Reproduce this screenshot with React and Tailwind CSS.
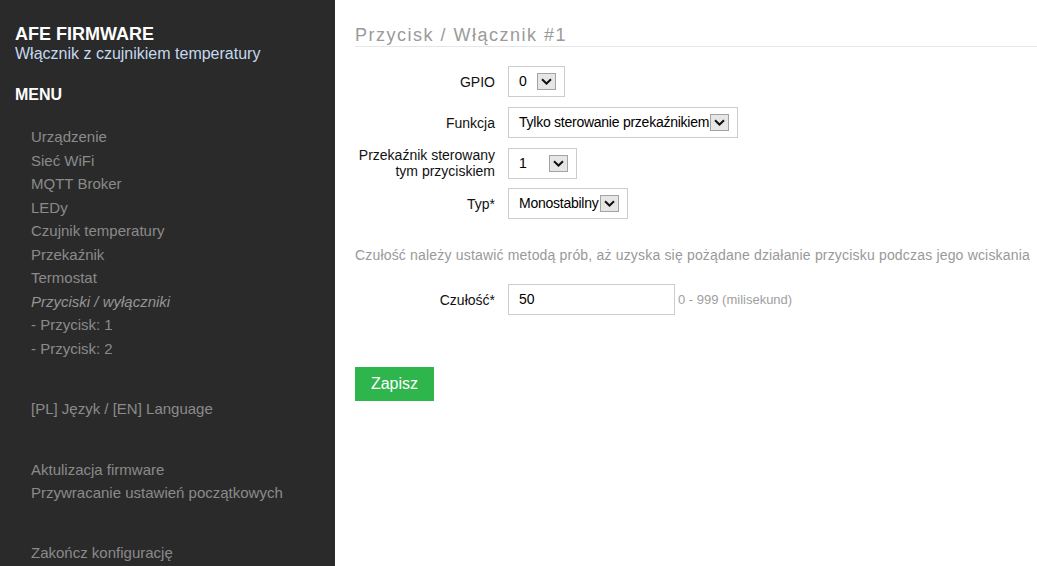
import React from "react";

const font = { fontFamily: '"Liberation Sans", Arial, sans-serif' };

function Chevron() {
  return (
    <span className="flex h-[17px] w-[19px] shrink-0 items-center justify-center border border-[#a3a3a3] bg-[#e6e6e6]">
      <svg width="11" height="7" viewBox="0 0 11 7">
        <path d="M1 1.2 L5.5 5.5 L10 1.2" fill="none" stroke="#111" strokeWidth="2" />
      </svg>
    </span>
  );
}

function Select({ value, w }) {
  return (
    <div className={`flex h-[31px] items-center justify-between border border-[#cccccc] bg-white pl-[10px] pr-[8px] text-[14px] text-black ${w}`}>
      <span className="whitespace-nowrap tracking-[-0.25px]">{value}</span>
      <Chevron />
    </div>
  );
}

function Row({ label, children, className = "" }) {
  return (
    <div className={`flex items-center ${className}`}>
      <div className="w-[140px] text-right text-[14px] leading-[16px] text-[#111]">{label}</div>
      <div className="ml-[13px] flex items-center">{children}</div>
    </div>
  );
}

const items = [
  "Urządzenie",
  "Sieć WiFi",
  "MQTT Broker",
  "LEDy",
  "Czujnik temperatury",
  "Przekaźnik",
  "Termostat",
];

export default function App() {
  return (
    <div className="flex h-[566px] w-[1037px] overflow-hidden bg-white" style={font}>
      <aside className="flex w-[335px] shrink-0 flex-col bg-[#2a2a2a] pl-[15px] pt-[24px]">
        <div className="text-[18px] font-bold leading-[21px] text-white">AFE FIRMWARE</div>
        <div className="text-[16px] leading-[18px] text-[#c4d9ef]">Włącznik z czujnikiem temperatury</div>
        <div className="mt-[23px] text-[16px] font-bold leading-[18px] text-white">MENU</div>
        <nav className="mt-[21px] flex flex-col pl-[16px] text-[15px] leading-[23.5px] text-[#8a8a8a]">
          {items.map((t) => (
            <span key={t}>{t}</span>
          ))}
          <span className="italic text-[#959595]">Przyciski / wyłączniki</span>
          <span>- Przycisk: 1</span>
          <span>- Przycisk: 2</span>
          <span className="mt-[37px]">[PL] Język / [EN] Language</span>
          <span className="mt-[37px]">Aktulizacja firmware</span>
          <span>Przywracanie ustawień początkowych</span>
          <span className="mt-[36px]">Zakończ konfigurację</span>
        </nav>
      </aside>
      <main className="flex flex-1 flex-col pl-[20px] pt-[25px]">
        <h1 className="border-b border-[#e6e6e6] text-[18px] leading-[21px] tracking-[1.5px] text-[#9a9a9a]">
          Przycisk / Włącznik #1
        </h1>
        <Row label="GPIO" className="mt-[19px]">
          <Select value="0" w="w-[57px]" />
        </Row>
        <Row label="Funkcja" className="mt-[10px]">
          <Select value="Tylko sterowanie przekaźnikiem" w="w-[230px]" />
        </Row>
        <Row label={<>Przekaźnik sterowany<br />tym przyciskiem</>} className="mt-[9px]">
          <Select value="1" w="w-[69px]" />
        </Row>
        <Row label="Typ*" className="mt-[9px]">
          <Select value="Monostabilny" w="w-[120px]" />
        </Row>
        <p className="mt-[28px] whitespace-nowrap text-[14px] leading-[16px] tracking-[0.18px] text-[#999]">
          Czułość należy ustawić metodą prób, aż uzyska się pożądane działanie przycisku podczas jego wciskania
        </p>
        <Row label="Czułość*" className="mt-[21px]">
          <div className="flex h-[31px] w-[167px] items-center border border-[#cccccc] pl-[10px] text-[14px] text-black">50</div>
          <span className="ml-[3px] text-[13px] text-[#a0a0a0]">0 - 999 (milisekund)</span>
        </Row>
        <div className="mt-[52px]">
          <button className="h-[34px] w-[79px] bg-[#2eb54b] text-[16px] text-white">Zapisz</button>
        </div>
      </main>
    </div>
  );
}
